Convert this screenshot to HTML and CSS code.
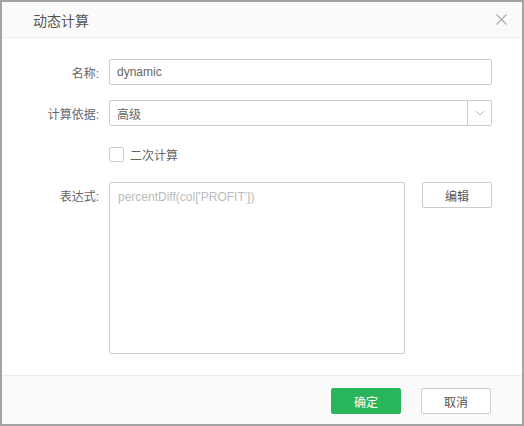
FILE: index.html
```html
<!DOCTYPE html>
<html>
<head>
<meta charset="utf-8">
<link rel="stylesheet" href="styles.css">
</head>
<body>
<div class="frame">
  <div class="dialog">
    <div class="header">
      <span class="title">动态计算</span>
      <svg class="close" width="11" height="11" viewBox="0 0 11 11"><path d="M0.5 0.5L10.5 10.5M10.5 0.5L0.5 10.5" stroke="#aaa" stroke-width="1.1" fill="none"/></svg>
    </div>
    <div class="body">
      <div class="row">
        <label class="label">名称:</label>
        <div class="input">dynamic</div>
      </div>
      <div class="row">
        <label class="label">计算依据:</label>
        <div class="select">
          <span class="select-text">高级</span>
          <span class="arrow"><svg width="10" height="6" viewBox="0 0 10 6"><path d="M1 1L5 5L9 1" stroke="#bbb" stroke-width="1" fill="none"/></svg></span>
        </div>
      </div>
      <div class="row">
        <span class="label"></span>
        <div class="check"><span class="box"></span><span class="check-text">二次计算</span></div>
      </div>
      <div class="row top">
        <label class="label expr-label">表达式:</label>
        <div class="expr-wrap">
          <div class="textarea">percentDiff(col['PROFIT'])</div>
          <button class="btn">编辑</button>
        </div>
      </div>
    </div>
    <div class="footer">
      <button class="btn primary">确定</button>
      <button class="btn">取消</button>
    </div>
  </div>
</div>
</body>
</html>
```
FILE: styles.css
```css
html, body { margin: 0; padding: 0; }
body { font-family: "Liberation Sans", Arial, "Noto Sans CJK SC", sans-serif; font-size: 12px; color: #555; }
.frame { width: 524px; height: 426px; box-sizing: border-box; background: #a3a3a3; padding: 2px; }
.dialog { width: 520px; height: 422px; background: #fff; display: flex; flex-direction: column; }
.header { height: 35px; background: #fafafa; border-bottom: 1px solid #ebebeb; display: flex; align-items: center; justify-content: space-between; padding: 0 15px 0 31px; }
.title { font-size: 14px; color: #555; }
.close { display: block; }
.body { flex: 1; padding: 21px 30px 0 0; display: flex; flex-direction: column; gap: 15px; }
.row { display: flex; align-items: center; }
.row.top { align-items: flex-start; }
.label { width: 97px; text-align: right; margin-right: 10px; color: #666; flex: none; }
.expr-label { padding-top: 5px; }
.input, .select { flex: 1; height: 26px; box-sizing: border-box; border: 1px solid #ccc; border-radius: 2px; display: flex; align-items: center; padding-left: 7px; color: #666; }
.select-text { flex: 1; }
.arrow { width: 23px; height: 24px; border-left: 1px solid #ccc; display: flex; align-items: center; justify-content: center; }
.check { height: 26px; display: flex; align-items: center; }
.box { width: 13px; height: 13px; border: 1px solid #ccc; border-radius: 2px; margin-right: 6px; }
.check-text { color: #666; }
.expr-wrap { flex: 1; display: flex; align-items: flex-start; gap: 17px; }
.textarea { width: 296px; height: 172px; box-sizing: border-box; border: 1px solid #ccc; border-radius: 2px; padding: 7px 8px; color: #bbb; font-size: 12px; }
.btn { width: 70px; height: 26px; box-sizing: border-box; border: 1px solid #ccc; border-radius: 2px; background: #fff; font-family: inherit; font-size: 12px; color: #555; padding: 0; }
.footer { height: 49px; border-top: 1px solid #ebebeb; background: #fafafa; display: flex; justify-content: flex-end; align-items: flex-start; padding: 12px 31px 0 0; box-sizing: border-box; gap: 20px; }
.btn.primary { background: #29b55a; border-color: #29b55a; color: #fff; }
```
